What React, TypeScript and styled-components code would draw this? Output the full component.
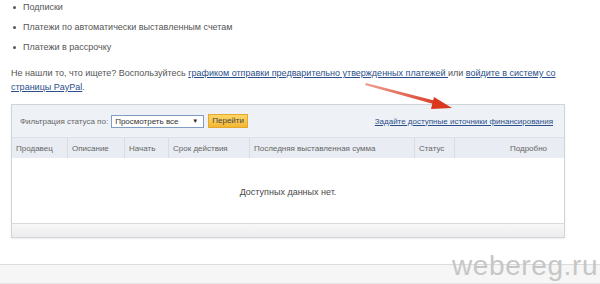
import { createGlobalStyle } from "styled-components";
import styled from "styled-components";

const GlobalStyle = createGlobalStyle`
  html, body {
    margin: 0;
    padding: 0;
    background: #ffffff;
  }
  body {
    font-family: "Liberation Sans", Arial, sans-serif;
    font-size: 9px;
    color: #555;
  }
`;

const Page = styled.div`
  position: relative;
  width: 600px;
  height: 284px;
  overflow: hidden;
  display: flex;
  flex-direction: column;
`;

const Content = styled.div`
  padding-left: 11px;
  width: 554px;
`;

const BulletList = styled.ul`
  list-style: none;
  margin: 0;
  padding: 0 0 0 12px;
`;

const BulletItem = styled.li`
  position: relative;
  line-height: 14px;
  padding-bottom: 6px;

  &::before {
    content: "";
    position: absolute;
    left: -10px;
    top: 6px;
    width: 3px;
    height: 3px;
    border-radius: 50%;
    background: #555;
  }
`;

const Note = styled.p`
  margin: 6px 0 0;
  line-height: 14px;
  color: #555;
`;

const TextLink = styled.a`
  color: #2b4f8a;
  text-decoration: underline;
  cursor: pointer;
`;

const Panel = styled.div`
  margin-top: 10px;
  border: 1px solid #cfd4da;
  background: #eef2f7;
  box-shadow: 0 1px 2px rgba(0, 0, 0, 0.08);
  font-size: 8px;
`;

const FilterBar = styled.div`
  height: 32px;
  display: flex;
  align-items: center;
  padding: 0 11px 0 8px;
  gap: 3px;
`;

const FilterLabel = styled.span`
  color: #666;
`;

const Select = styled.div`
  width: 83px;
  height: 11px;
  border: 1px solid #7f9dc4;
  background: #fff;
  display: flex;
  align-items: center;
  justify-content: space-between;
  padding: 0 5px 0 3px;
  box-sizing: content-box;
  color: #333;
  font-size: 8px;
`;

const Caret = styled.span`
  font-size: 6px;
  color: #222;
`;

const GoButton = styled.button`
  width: 40px;
  height: 14px;
  padding: 0;
  border: 1px solid #e3a92a;
  background: linear-gradient(#ffd768, #f3b634);
  font-family: inherit;
  font-size: 8px;
  color: #444;
  line-height: 12px;
  margin-left: 1px;
`;

const Spacer = styled.div`
  flex: 1;
`;

const HeaderRow = styled.div`
  display: flex;
  height: 20px;
  background: #e9edf3;
  border-top: 1px solid #dde2e8;
`;

const HeadCell = styled.div<{ $w: number; $right?: boolean }>`
  width: ${(p) => p.$w}px;
  flex: ${(p) => (p.$right ? "1" : "none")};
  display: flex;
  align-items: center;
  justify-content: ${(p) => (p.$right ? "flex-end" : "flex-start")};
  padding: ${(p) => (p.$right ? "0 17px 0 0" : "0 0 0 4px")};
  box-sizing: border-box;
  border-right: ${(p) => (p.$right ? "none" : "1px solid #d8dde4")};
  color: #666;
  white-space: nowrap;
`;

const Body = styled.div`
  height: 65px;
  background: #fff;
  display: flex;
  align-items: center;
  justify-content: center;
  color: #484848;
  font-size: 9px;
  padding-top: 2px;
  box-sizing: border-box;
`;

const PanelFooter = styled.div`
  height: 13px;
  border-top: 1px solid #dadada;
  background: linear-gradient(#f7f7f7, #ececec);
`;

const BottomBand = styled.div`
  margin-top: 26px;
  height: 19px;
  border-top: 1px solid #dcdcdc;
  border-bottom: 1px solid #e4e4e4;
  background: #f6f6f6;
`;

const Watermark = styled.div`
  position: absolute;
  left: 452px;
  top: 250px;
  font-family: "Liberation Sans", Arial, sans-serif;
  font-size: 28px;
  letter-spacing: 0.6px;
  color: #c6c6c6;
  white-space: nowrap;
`;

const ArrowSvg = styled.svg`
  position: absolute;
  left: 360px;
  top: 78px;
  pointer-events: none;
`;

const columns = [
  { label: "Продавец", w: 56 },
  { label: "Описание", w: 57 },
  { label: "Начать", w: 44 },
  { label: "Срок действия", w: 81 },
  { label: "Последняя выставленная сумма", w: 165 },
  { label: "Статус", w: 40 },
];

export default function App() {
  return (
    <>
      <GlobalStyle />
      <Page>
        <Content>
          <BulletList>
            <BulletItem>Подписки</BulletItem>
            <BulletItem>Платежи по автоматически выставленным счетам</BulletItem>
            <BulletItem>Платежи в рассрочку</BulletItem>
          </BulletList>
          <Note>
            Не нашли то, что ищете? Воспользуйтесь{" "}
            <TextLink>графиком отправки предварительно утвержденных платежей </TextLink>
            или <TextLink>войдите в систему со страницы PayPal</TextLink>.
          </Note>
          <Panel>
            <FilterBar>
              <FilterLabel>Фильтрация статуса по:</FilterLabel>
              <Select>
                Просмотреть все <Caret>▼</Caret>
              </Select>
              <GoButton>Перейти</GoButton>
              <Spacer />
              <TextLink>Задайте доступные источники финансирования</TextLink>
            </FilterBar>
            <HeaderRow>
              {columns.map((c) => (
                <HeadCell key={c.label} $w={c.w}>
                  {c.label}
                </HeadCell>
              ))}
              <HeadCell $w={100} $right>
                Подробно
              </HeadCell>
            </HeaderRow>
            <Body>Доступных данных нет.</Body>
            <PanelFooter />
          </Panel>
        </Content>
        <BottomBand />
        <Watermark>webereg.ru</Watermark>
        <ArrowSvg width="100" height="36" viewBox="0 0 100 36">
          <defs>
            <linearGradient id="arrowGrad" x1="0" y1="0" x2="1" y2="0">
              <stop offset="0" stopColor="#e2604a" stopOpacity="0.6" />
              <stop offset="1" stopColor="#d93a22" />
            </linearGradient>
          </defs>
          <path d="M6 5 L78 23.5 L77 27 L5 7 Z" fill="url(#arrowGrad)" />
          <path d="M92 30 L74 19 L71 31 Z" fill="#d9381f" />
        </ArrowSvg>
      </Page>
    </>
  );
}
